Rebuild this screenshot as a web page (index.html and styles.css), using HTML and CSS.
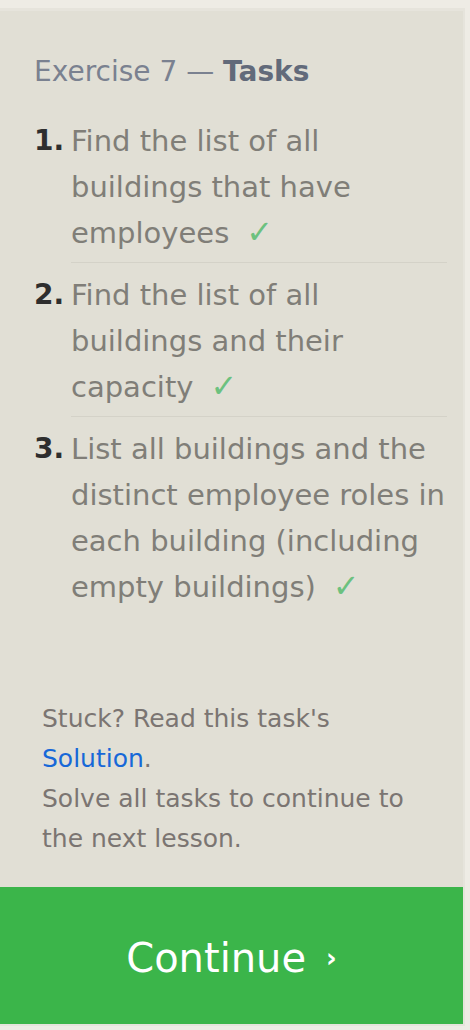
FILE: index.html
```html
<!DOCTYPE html>
<html>
<head>
<meta charset="utf-8">
<link rel="stylesheet" href="styles.css">
</head>
<body>
<div class="panel">
  <h2 class="title">Exercise 7 — <strong>Tasks</strong></h2>
  <ol class="tasks">
    <li class="task"><span class="num">1.</span><div class="text"><span class="label">Find the list of all buildings that have employees</span><span class="check">✓</span></div></li>
    <li class="task"><span class="num">2.</span><div class="text"><span class="label">Find the list of all buildings and their capacity</span><span class="check">✓</span></div></li>
    <li class="task last"><span class="num">3.</span><div class="text"><span class="label">List all buildings and the distinct employee roles in each building (including empty buildings)</span><span class="check">✓</span></div></li>
  </ol>
  <div class="footer">
    <p>Stuck? Read this task's <a href="#">Solution</a>.</p>
    <p>Solve all tasks to continue to the next lesson.</p>
  </div>
  <a class="continue" href="#">Continue<span class="chev">›</span></a>
</div>
</body>
</html>
```
FILE: styles.css
```css
html, body {
  margin: 0;
  padding: 0;
  background: #eeece5;
}
body {
  font-family: "DejaVu Sans", "Liberation Sans", sans-serif;
}
.panel {
  margin-top: 8px;
  width: 465px;
  box-sizing: border-box;
  background: #e1dfd5;
  border-top: 3px solid #e6e4dc;
  border-right: 2px solid #e6e4dc;
  border-bottom: 2px solid #e6e4dc;
  display: flex;
  flex-direction: column;
}
.title {
  margin: 0;
  padding: 43px 0 0 34px;
  font-size: 28px;
  line-height: 36px;
  font-weight: normal;
  color: #7a8190;
}
.title strong {
  color: #626a7a;
  font-weight: bold;
}
.tasks {
  list-style: none;
  margin: 28px 0 0 0;
  padding: 0 16px 0 34px;
}
.task {
  display: flex;
  font-size: 29px;
  line-height: 46px;
}
.num {
  width: 37px;
  flex: none;
  color: #2e2e2e;
  font-weight: bold;
  font-size: 28px;
}
.text {
  flex: 1;
  color: #807e78;
  padding-bottom: 6px;
  border-bottom: 1px solid #d4d2c8;
  margin-bottom: 9px;
}
.task.last .text {
  border-bottom: none;
  padding-bottom: 0;
  margin-bottom: 0;
}
.check {
  display: inline-block;
  color: #6cc17f;
  margin-left: 17px;
  font-size: 32px;
  line-height: 0;
}
.footer {
  margin-top: 89px;
  padding: 0 51px 0 42px;
  font-size: 25px;
  line-height: 40px;
  color: #7b7572;
}
.footer p {
  margin: 0;
}
.footer a {
  color: #1768d8;
  text-decoration: none;
}
.continue {
  margin-top: 28px;
  height: 137px;
  box-sizing: border-box;
  padding-top: 4px;
  background: #3bb54a;
  color: #fff;
  text-decoration: none;
  font-size: 40px;
  display: flex;
  align-items: center;
  justify-content: center;
}
.chev {
  font-size: 26px;
  margin-left: 20px;
  font-weight: bold;
}
```
